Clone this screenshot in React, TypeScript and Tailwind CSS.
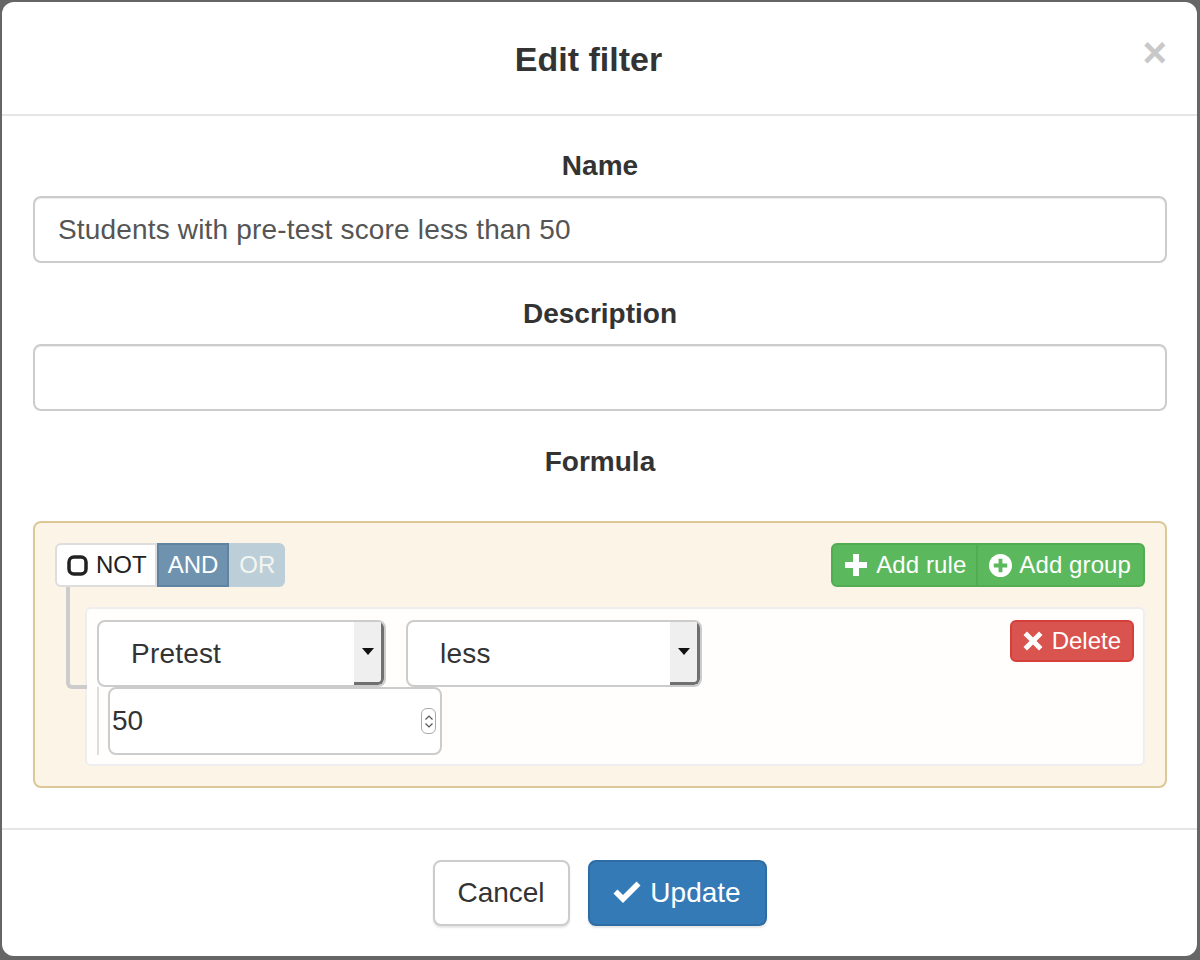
import React from "react";

// Bootstrap-ish "Edit filter" modal with a query builder

const SquareIcon = () => (
  <svg width="21" height="21" viewBox="0 0 21 21">
    <rect x="2" y="2" width="17" height="17" rx="5" fill="none" stroke="#222" strokeWidth="3.5" />
  </svg>
);

const PlusIcon = () => (
  <svg width="22" height="22" viewBox="0 0 22 22">
    <path d="M8 0h6v8h8v6h-8v8H8v-8H0V8h8z" fill="#fff" />
  </svg>
);

const PlusSignIcon = () => (
  <svg width="23" height="23" viewBox="0 0 24 24">
    <circle cx="12" cy="12" r="12" fill="#fff" />
    <path d="M10 5h4v5h5v4h-5v5h-4v-5H5v-4h5z" fill="#5cb85c" />
  </svg>
);

const RemoveIcon = () => (
  <svg width="20" height="20" viewBox="0 0 20 20">
    <path d="M4 0.5l6 6 6-6 3.5 3.5-6 6 6 6-3.5 3.5-6-6-6 6L0.5 16l6-6-6-6z" fill="#fff" />
  </svg>
);

const OkIcon = () => (
  <svg width="28" height="24" viewBox="0 0 28 24">
    <path d="M0.5 12.5l4-4 5.5 5.5L23.5 0.5l4 4L10 22z" fill="#fff" />
  </svg>
);

const FakeSelect = ({ label, width }: { label: string; width: string }) => (
  <div className={`${width} h-[67px] flex border-2 border-[#ccc] rounded-lg bg-white overflow-hidden`}>
    <div className="flex-1 flex items-center pl-[32px] text-[28px] tracking-[0.2px] text-[#333]">{label}</div>
    <div className="w-[30px] bg-[#efefef] border-r-[3px] border-b-[3px] border-[#707070] rounded-br-md flex items-center justify-center">
      <svg width="12" height="8" viewBox="0 0 12 8">
        <path d="M0 0h12L6 7z" fill="#111" />
      </svg>
    </div>
  </div>
);

export default function App() {
  return (
    <div className="w-[1200px] h-[960px] bg-[#666] pl-[2px] pt-[2px] font-['Liberation_Sans',Arial,sans-serif]">
      <div className="w-[1195px] h-[954px] bg-white rounded-[12px] flex flex-col overflow-hidden">
        {/* Header */}
        <div className="relative h-[114px] border-b-2 border-[#e5e5e5] flex items-center justify-center pt-[2px] pr-[22px]">
          <h4 className="text-[34px] font-bold text-[#333]">Edit filter</h4>
          <span className="absolute right-[30px] top-[30px] text-[42px] font-bold leading-none text-[#c8c8c8]">×</span>
        </div>

        {/* Body */}
        <div className="pl-[31px] pr-[30px] pt-[30px] pb-[40px]">
          <label className="block text-center text-[28px] leading-[40px] font-bold text-[#333] mb-[10px]">Name</label>
          <div className="h-[67px] border-2 border-[#ccc] rounded-lg flex items-center px-[23px] text-[28px] tracking-[0.17px] text-[#555] shadow-[inset_0_1px_1px_rgba(0,0,0,0.075)]">
            Students with pre-test score less than 50
          </div>

          <label className="block mt-[31px] text-center text-[28px] leading-[40px] font-bold text-[#333] mb-[10px]">Description</label>
          <div className="h-[67px] border-2 border-[#ccc] rounded-lg shadow-[inset_0_1px_1px_rgba(0,0,0,0.075)]" />

          <label className="block mt-[31px] text-center text-[28px] leading-[40px] font-bold text-[#333] mb-[39px]">Formula</label>

          {/* Query builder group */}
          <div className="border-2 border-[#dcc896] rounded-lg bg-[#fcf5e7] p-[20px]">
            <div className="flex justify-between h-[44px]">
              <div className="flex text-[24px] h-[44px]">
                <div className="flex items-center gap-[8px] pl-[10px] pr-[8px] bg-white border-2 border-[#ddd] rounded-l-md text-[#222]">
                  <SquareIcon />
                  <span>NOT</span>
                </div>
                <div className="flex items-center px-[9px] bg-[#6f92ae] border-2 border-[#5f83a0] text-white">AND</div>
                <div className="flex items-center px-[10px] bg-[#bccfd9] rounded-r-md text-[#f3f6f0]">OR</div>
              </div>
              <div className="flex text-[24px] h-[44px] text-white tracking-[0.1px]">
                <div className="flex items-center gap-[9px] pl-[12px] pr-[10px] bg-[#5cb85c] border-2 border-[#52ad52] rounded-l-md">
                  <PlusIcon />
                  <span>Add rule</span>
                </div>
                <div className="flex items-center gap-[7px] pl-[11px] pr-[12px] bg-[#5cb85c] border-2 border-l-0 border-[#52ad52] rounded-r-md">
                  <PlusSignIcon />
                  <span>Add group</span>
                </div>
              </div>
            </div>

            {/* Rule */}
            <div className="relative mt-[20px] ml-[30px] border-2 border-[#eee] rounded-md bg-[#fffefd] pl-[10px] pt-[11px] pr-[9px] pb-[9px]">
              <div className="absolute left-[-21px] top-[-22px] w-[21px] h-[102px] border-l-4 border-b-4 border-[#ccc] rounded-bl-md" />
              <div className="flex justify-between items-start">
                <div className="flex gap-[20px]">
                  <FakeSelect label="Pretest" width="w-[289px]" />
                  <FakeSelect label="less" width="w-[296px]" />
                </div>
                <div className="h-[42px] flex items-center gap-[9px] px-[11px] bg-[#d9534f] border-2 border-[#d43f3a] rounded-md text-white text-[24px]">
                  <RemoveIcon />
                  <span>Delete</span>
                </div>
              </div>
              <div className="flex border-l-2 border-[#ddd] pl-[9px] h-[68px]">
                <div className="w-[334px] h-[68px] border-2 border-[#ccc] rounded-lg bg-white flex items-center justify-between pl-[2px] pr-[4px] text-[28px] text-[#333]">
                  <span>50</span>
                  <div className="w-[15px] h-[26px] border border-[#aaa] rounded-md flex flex-col items-center justify-center gap-[3px]">
                    <svg width="8" height="5" viewBox="0 0 8 5"><path d="M0.5 4.5L4 1l3.5 3.5" fill="none" stroke="#555" strokeWidth="1.2" /></svg>
                    <svg width="8" height="5" viewBox="0 0 8 5"><path d="M0.5 0.5L4 4l3.5-3.5" fill="none" stroke="#555" strokeWidth="1.2" /></svg>
                  </div>
                </div>
              </div>
            </div>
          </div>
        </div>

        {/* Footer */}
        <div className="border-t-2 border-[#e5e5e5] pt-[30px] flex justify-center gap-[18px]">
          <div className="w-[137px] h-[66px] flex items-center justify-center border-2 border-[#ccc] rounded-lg bg-white text-[28px] text-[#333] shadow-[0_2px_2px_rgba(0,0,0,0.1)]">
            Cancel
          </div>
          <div className="w-[179px] h-[66px] flex items-center justify-center gap-[9px] border-2 border-[#2e6da4] rounded-lg bg-[#337ab7] text-[28px] text-white shadow-[0_2px_2px_rgba(0,0,0,0.1)]">
            <OkIcon />
            <span>Update</span>
          </div>
        </div>
      </div>
    </div>
  );
}
